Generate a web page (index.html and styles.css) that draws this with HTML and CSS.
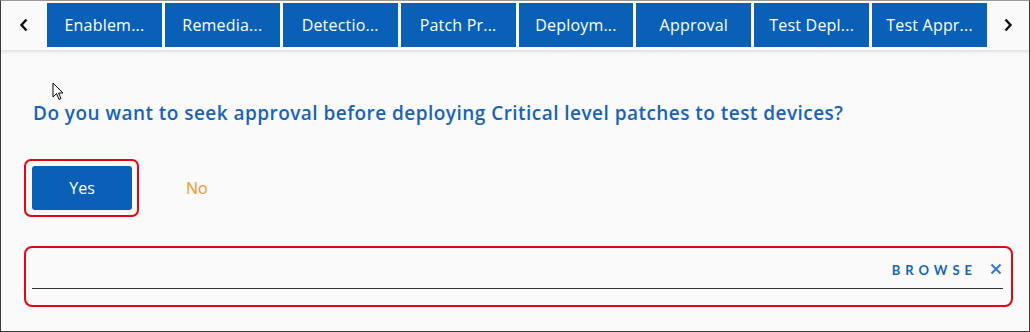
FILE: index.html
```html
<!DOCTYPE html>
<html>
<head>
<meta charset="utf-8">
<link rel="stylesheet" href="styles.css">
</head>
<body>
<div class="frame">
  <div class="tabbar">
    <div class="arrow arrow-left">
      <svg width="10" height="14" viewBox="0 0 10 14"><path d="M7.5 1.5 L2.5 7 L7.5 12.5" fill="none" stroke="#111" stroke-width="2.4"/></svg>
    </div>
    <div class="tabs">
      <div class="tab">Enablem...</div>
      <div class="tab">Remedia...</div>
      <div class="tab">Detectio...</div>
      <div class="tab">Patch Pr...</div>
      <div class="tab">Deploym...</div>
      <div class="tab">Approval</div>
      <div class="tab">Test Depl...</div>
      <div class="tab">Test Appr...</div>
    </div>
    <div class="arrow arrow-right">
      <svg width="10" height="14" viewBox="0 0 10 14"><path d="M2.5 1.5 L7.5 7 L2.5 12.5" fill="none" stroke="#111" stroke-width="2.4"/></svg>
    </div>
  </div>
  <div class="content">
    <h2 class="question">Do you want to seek approval before deploying Critical level patches to test devices?</h2>
    <div class="choices">
      <div class="highlight">
        <button class="btn-yes">Yes</button>
      </div>
      <span class="no">No</span>
    </div>
    <div class="browse-box">
      <div class="browse-field">
        <span class="browse">BROWSE</span>
        <span class="clear">
          <svg width="12" height="12" viewBox="0 0 12 12"><path d="M1.5 1.5 L10.5 10.5 M10.5 1.5 L1.5 10.5" stroke="#3d7cc9" stroke-width="2.2" fill="none"/></svg>
        </span>
      </div>
    </div>
  </div>
  <svg class="cursor" width="14" height="20" viewBox="0 0 14 20"><path d="M1 1 L1 15 L4.5 11.5 L7 17.5 L9 16.6 L6.6 11 L11 11 Z" fill="#fff" stroke="#000" stroke-width="1"/></svg>
</div>
</body>
</html>
```
FILE: styles.css
```css
* { box-sizing: border-box; }
html, body { margin: 0; padding: 0; }
body { background: #fafafa; font-family: "Open Sans", Lato, sans-serif; }

.frame {
  position: relative;
  width: 1030px;
  height: 332px;
  border: 1px solid #3a3a3a;
  border-top-color: #9a9a9a;
  background: #fafafa;
  display: flex;
  flex-direction: column;
}

.tabbar {
  display: flex;
  padding-top: 2px;
  height: 49px;
  background: #fafafa;
  box-shadow: 0 2px 3px rgba(0,0,0,0.10);
}
.arrow {
  display: flex;
  align-items: center;
  justify-content: center;
  height: 44px;
}
.arrow-left { width: 46px; }
.arrow-right { width: 42px; }
.tabs {
  display: flex;
  gap: 3px;
  width: 940px;
}
.tab {
  flex: 1;
  height: 44px;
  background: #0a60b6;
  color: #fff;
  font-size: 16px;
  letter-spacing: 0.2px;
  display: flex;
  align-items: center;
  justify-content: center;
  white-space: nowrap;
}

.content {
  padding: 51px 17px 0 23px;
  display: flex;
  flex-direction: column;
}
.question {
  margin: 0 0 0 9px;
  font-size: 19px;
  font-weight: 600;
  letter-spacing: 0.46px;
  color: #1763b8;
  line-height: 24px;
  white-space: nowrap;
}
.choices {
  display: flex;
  align-items: center;
  margin-top: 34px;
}
.highlight {
  border: 2px solid #e30613;
  border-radius: 7px;
  padding: 5px 5px 5px 6px;
  width: 115px;
}
.btn-yes {
  display: block;
  width: 100px;
  height: 44px;
  border: none;
  border-radius: 3px;
  background: #0a60b6;
  color: #fff;
  font-family: "Open Sans", Lato, sans-serif;
  font-size: 16px;
}
.no {
  margin-left: 47px;
  color: #f39328;
  font-size: 16px;
  font-weight: 500;
}
.browse-box {
  margin-top: 29px;
  width: 989px;
  height: 61px;
  border: 2px solid #e30613;
  border-radius: 8px;
  padding: 0 8px 0 6px;
}
.browse-field {
  height: 41px;
  border-bottom: 1px solid #333;
  display: flex;
  align-items: center;
  justify-content: flex-end;
  padding-top: 3px;
}
.browse {
  color: #1763b8;
  font-family: Lato, sans-serif;
  font-size: 13px;
  font-weight: 700;
  letter-spacing: 5px;
}
.clear {
  display: flex;
  margin-left: 13px;
  margin-right: 1px;
  margin-top: -2px;
}
.cursor {
  position: absolute;
  left: 51px;
  top: 81px;
}
```
